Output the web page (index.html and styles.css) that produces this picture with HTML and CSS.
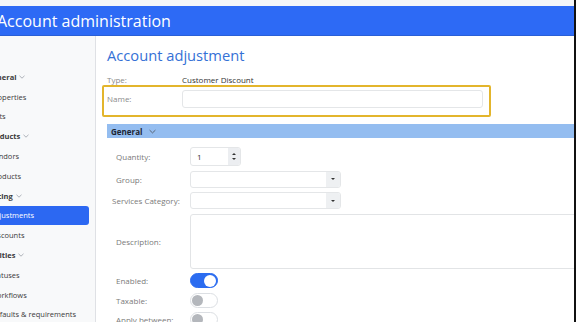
FILE: index.html
```html
<!DOCTYPE html>
<html lang="en">
<head>
  <meta charset="UTF-8">
  <meta name="viewport" content="width=device-width, initial-scale=1.0">
  <title>Account administration</title>
  <link rel="stylesheet" href="styles.css">
</head>
<body>
  <div class="page">
    <!-- Header -->
    <div class="top-strip"></div>
    <header class="app-header">
      <h1 class="app-title">Account administration</h1>
    </header>

    <div class="layout">
      <!-- Sidebar -->
      <aside class="sidebar">
        <ul class="nav">
          <li class="nav-group">General <svg class="chev" viewBox="0 0 6 4"><path d="M0.5 0.8 L3 3.2 L5.5 0.8"/></svg></li>
          <li class="nav-item">Properties</li>
          <li class="nav-item">Lists</li>
          <li class="nav-group">Products <svg class="chev" viewBox="0 0 6 4"><path d="M0.5 0.8 L3 3.2 L5.5 0.8"/></svg></li>
          <li class="nav-item">Vendors</li>
          <li class="nav-item">Products</li>
          <li class="nav-group">Pricing <svg class="chev" viewBox="0 0 6 4"><path d="M0.5 0.8 L3 3.2 L5.5 0.8"/></svg></li>
          <li class="nav-item active">Adjustments</li>
          <li class="nav-item">Discounts</li>
          <li class="nav-group">Entities <svg class="chev" viewBox="0 0 6 4"><path d="M0.5 0.8 L3 3.2 L5.5 0.8"/></svg></li>
          <li class="nav-item">Statuses</li>
          <li class="nav-item">Workflows</li>
          <li class="nav-item">Defaults &amp; requirements</li>
        </ul>
      </aside>

      <!-- Main Content -->
      <main class="content">
        <h2 class="page-title">Account adjustment</h2>

        <div class="info-row">
          <span class="info-label">Type:</span>
          <span class="info-value">Customer Discount</span>
        </div>

        <div class="name-box">
          <span class="info-label">Name:</span>
          <div class="text-input"></div>
        </div>

        <div class="section-bar">
          <span>General</span>
          <svg class="chev chev-dark" viewBox="0 0 6 4"><path d="M0.5 0.8 L3 3.2 L5.5 0.8"/></svg>
        </div>

        <div class="form-grid">
          <label class="form-label">Quantity:</label>
          <div class="spinner">
            <span class="spinner-value">1</span>
            <span class="spinner-arrows"><i class="tri-up"></i><i class="tri-down"></i></span>
          </div>

          <label class="form-label">Group:</label>
          <div class="select"><span class="select-arrow"><i class="tri-down"></i></span></div>

          <label class="form-label wide">Services Category:</label>
          <div class="select"><span class="select-arrow"><i class="tri-down"></i></span></div>

          <label class="form-label">Description:</label>
          <div class="textarea"></div>

          <label class="form-label">Enabled:</label>
          <div class="toggle on"><span class="knob"></span></div>

          <label class="form-label">Taxable:</label>
          <div class="toggle"><span class="knob"></span></div>

          <label class="form-label">Apply between:</label>
          <div class="toggle"><span class="knob"></span></div>
        </div>
      </main>
    </div>
  </div>
</body>
</html>
```

FILE: styles.css
```css
/* Reset */
* {
  margin: 0;
  padding: 0;
  box-sizing: border-box;
}

body {
  font-family: 'Open Sans', 'Noto Sans', sans-serif;
  background-color: #ffffff;
  color: #333333;
  overflow: hidden;
}

.page {
  width: 576px;
  height: 322px;
  overflow: hidden;
  border-right: 2px solid #111111;
  display: flex;
  flex-direction: column;
}

/* Header */
.top-strip {
  height: 6px;
  background-color: #f4f6f9;
}

.app-header {
  height: 30px;
  background-color: #2d6af5;
  border-bottom: 1px solid #2a5fd6;
  display: flex;
  align-items: center;
  overflow: hidden;
}

.app-title {
  font-size: 16px;
  font-weight: 400;
  color: #ffffff;
  margin-left: -3px;
  white-space: nowrap;
}

/* Layout */
.layout {
  flex: 1;
  display: flex;
  min-height: 0;
}

.sidebar {
  width: 96px;
  flex-shrink: 0;
  background-color: #f8f9fa;
  border-right: 1px solid #dfe1e5;
  padding-top: 31px;
  overflow: hidden;
}

.nav {
  list-style: none;
}

.nav li {
  height: 19.8px;
  display: flex;
  align-items: center;
  font-size: 7.5px;
  white-space: nowrap;
  color: #3a3a3a;
}

.nav-group {
  font-weight: 700;
  margin-left: -13px;
  gap: 3px;
  color: #222222;
}

.nav-item {
  margin-left: -10px;
}

.nav-item.active {
  background-color: #2c68f2;
  color: #ffffff;
  border-radius: 0 3px 3px 0;
  width: 99px;
  height: 19px;
  margin-top: 0.4px;
  margin-bottom: 0.4px;
}

.chev {
  width: 6px;
  height: 4px;
  fill: none;
  stroke: #9aa0a8;
  stroke-width: 0.8;
}

.chev-dark {
  stroke: #55606e;
  width: 7px;
  height: 5px;
}

/* Main content */
.content {
  flex: 1;
  min-width: 0;
  overflow: hidden;
  padding-left: 6px;
}

.page-title {
  font-size: 14.7px;
  font-weight: 400;
  color: #3571d6;
  line-height: 20px;
  margin-top: 9px;
  padding-left: 5px;
  white-space: nowrap;
}

.info-row {
  display: flex;
  align-items: center;
  height: 11px;
  margin-top: 9px;
  padding-left: 5px;
  font-size: 8px;
}

.info-label {
  width: 75px;
  flex-shrink: 0;
  font-size: 8px;
  color: #8a8a8a;
}

.info-value {
  color: #333333;
}

.name-box {
  width: 389px;
  height: 32px;
  border: 2px solid #e3b52c;
  border-radius: 2px;
  display: flex;
  align-items: flex-start;
  padding: 3px 6px 0 3px;
}

.name-box .info-label {
  line-height: 18px;
}

.text-input {
  flex: 1;
  height: 18px;
  border: 1px solid #e4e6e8;
  border-radius: 3px;
  background-color: #ffffff;
}

.section-bar {
  margin-left: 5px;
  margin-top: 7px;
  height: 14px;
  background-color: #94bdf0;
  display: flex;
  align-items: center;
  gap: 7px;
  padding-left: 4px;
  font-size: 8px;
  font-weight: 700;
  color: #1d2633;
}

/* Form */
.form-grid {
  display: grid;
  grid-template-columns: 74px 400px;
  grid-template-rows: 19px 17px 17px 55px 15px 15px 15px;
  row-gap: 4.5px;
  margin-top: 9px;
  padding-left: 14px;
  align-items: center;
}

.form-label {
  font-size: 8px;
  color: #7a7a7a;
  white-space: nowrap;
}

.form-label.wide {
  margin-left: -4px;
}

.spinner {
  width: 51px;
  height: 19px;
  border: 1px solid #e4e6e8;
  border-radius: 3px;
  display: flex;
  overflow: hidden;
}

.spinner-value {
  flex: 1;
  font-size: 8px;
  line-height: 17px;
  padding-left: 6px;
  color: #333333;
}

.spinner-arrows {
  width: 12px;
  background-color: #eceef1;
  display: flex;
  flex-direction: column;
  align-items: center;
  justify-content: center;
  gap: 3px;
}

.tri-up,
.tri-down {
  display: block;
  width: 0;
  height: 0;
  border-left: 2px solid transparent;
  border-right: 2px solid transparent;
}

.tri-up {
  border-bottom: 2.5px solid #333333;
}

.tri-down {
  border-top: 2.5px solid #333333;
}

.select {
  width: 151px;
  height: 17px;
  border: 1px solid #e4e6e8;
  border-radius: 3px;
  display: flex;
  justify-content: flex-end;
  overflow: hidden;
}

.select-arrow {
  width: 14px;
  background-color: #eef0f2;
  display: flex;
  align-items: center;
  justify-content: center;
}

.textarea {
  height: 55px;
  border: 1px solid #e2e4e6;
  border-radius: 3px;
}

.toggle {
  width: 28px;
  height: 15px;
  border-radius: 8px;
  border: 1px solid #dcdfe3;
  background-color: #ffffff;
  display: flex;
  align-items: center;
  padding: 0 1px;
}

.toggle .knob {
  width: 11px;
  height: 11px;
  border-radius: 50%;
  background-color: #b4b7bc;
}

.toggle.on {
  background-color: #2b6cf0;
  border-color: #2b6cf0;
  justify-content: flex-end;
}

.toggle.on .knob {
  background-color: #ffffff;
  width: 12px;
  height: 12px;
}
```
